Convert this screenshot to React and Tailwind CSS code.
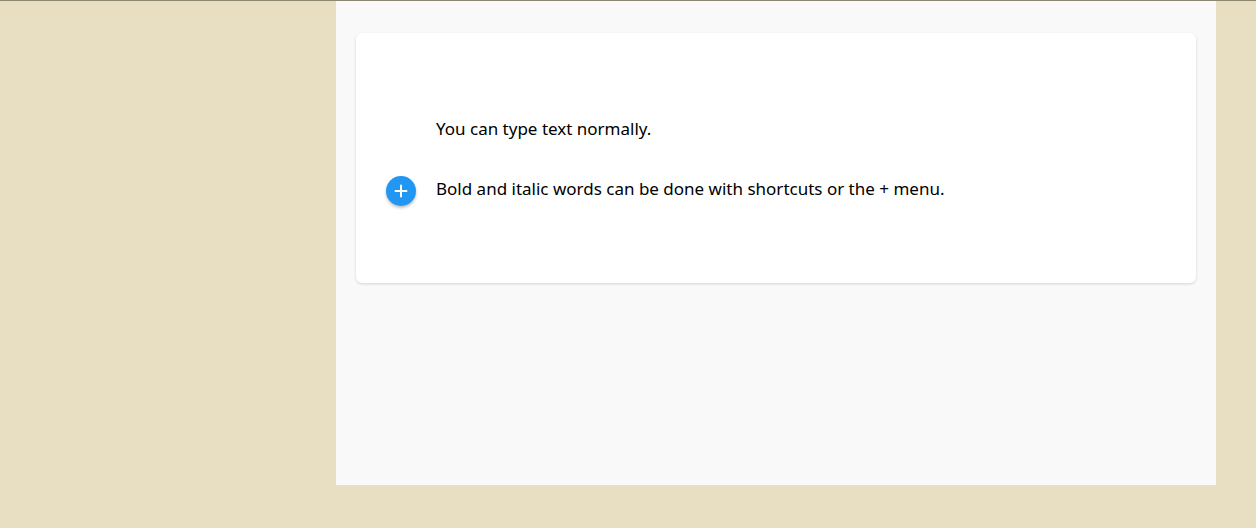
import React from "react";

export default function App() {
  return (
    <div className="w-[1256px] h-[528px] bg-[#e8dfc3] border-t border-[#8b8670] overflow-hidden" style={{ fontFamily: '"Noto Sans", "Open Sans", sans-serif' }}>
      <div className="ml-[336px] w-[880px] h-[484px] bg-[#f9f9f9] px-5 pt-8">
        <div className="bg-white rounded-md shadow-[0_1px_3px_rgba(0,0,0,0.15)] h-[250px] pt-[84px] pl-[30px] pr-5">
          <div className="flex items-center h-6">
            <div className="w-[30px] shrink-0" />
            <p className="ml-[20px] text-[17px] text-black leading-6">You can type text normally.</p>
          </div>
          <div className="flex items-center h-6 mt-9">
            <button className="w-[30px] h-[30px] mt-[3px] shrink-0 rounded-full bg-[#2196f3] shadow-[0_2px_3px_rgba(0,0,0,0.25)] flex items-center justify-center">
              <svg width="14" height="14" viewBox="0 0 14 14">
                <path d="M7 1.5v11M1.5 7h11" stroke="white" strokeWidth="2" strokeLinecap="round" />
              </svg>
            </button>
            <p className="ml-[20px] text-[17px] text-black leading-6">Bold and italic words can be done with shortcuts or the + menu.</p>
          </div>
        </div>
      </div>
    </div>
  );
}
